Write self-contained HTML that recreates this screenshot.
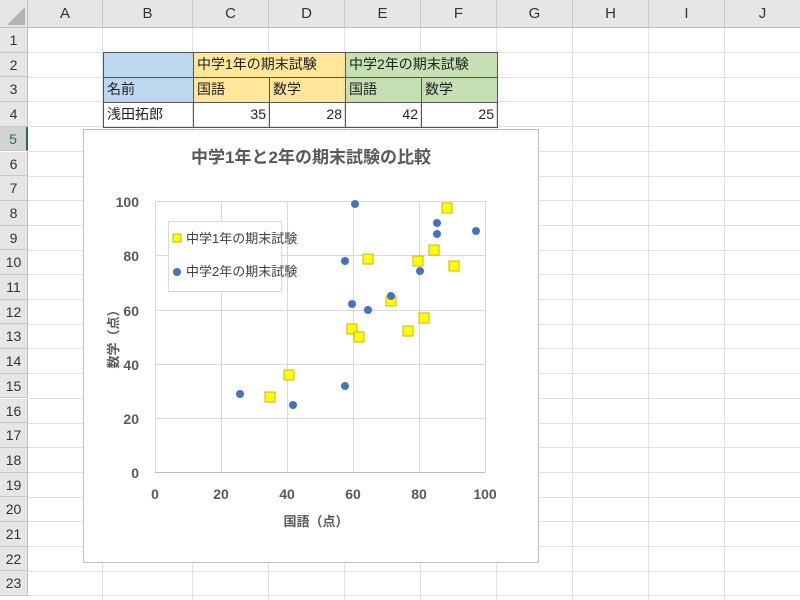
<!DOCTYPE html>
<html><head><meta charset="utf-8"><style>
body{margin:0;width:800px;height:600px;overflow:hidden;background:#fff;font-family:"Liberation Sans","Noto Sans CJK JP",sans-serif;position:relative}
.a{position:absolute;box-sizing:border-box}
.ch{top:0;height:28px;background:#e6e6e6;border-right:1px solid #c8c8c8;border-bottom:1px solid #bdbdbd;text-align:center;line-height:28px;font-size:15px;color:#333}
.rh{left:0;width:28px;background:#e6e6e6;border-bottom:1px solid #c8c8c8;border-right:1px solid #bdbdbd;text-align:center;font-size:14px;color:#333}
.c{font-size:14px;border:1px solid #555;padding-left:3px;line-height:23px;color:#222}
</style></head><body>
<div id="g"></div>
<div class="a c" style="left:103px;top:52px;width:91px;height:26px;background:#bdd7ee"></div>
<div class="a c" style="left:193px;top:52px;width:153px;height:26px;background:#ffe699">中学1年の期末試験</div>
<div class="a c" style="left:345px;top:52px;width:153px;height:26px;background:#c6e0b4">中学2年の期末試験</div>
<div class="a c" style="left:103px;top:77px;width:91px;height:26px;background:#bdd7ee">名前</div>
<div class="a c" style="left:193px;top:77px;width:77px;height:26px;background:#ffe699">国語</div>
<div class="a c" style="left:269px;top:77px;width:77px;height:26px;background:#ffe699">数学</div>
<div class="a c" style="left:345px;top:77px;width:77px;height:26px;background:#c6e0b4">国語</div>
<div class="a c" style="left:421px;top:77px;width:77px;height:26px;background:#c6e0b4">数学</div>
<div class="a c" style="left:103px;top:102px;width:91px;height:26px">浅田拓郎</div>
<div class="a c" style="left:193px;top:102px;width:77px;height:26px;text-align:right;padding-right:3px">35</div>
<div class="a c" style="left:269px;top:102px;width:77px;height:26px;text-align:right;padding-right:3px">28</div>
<div class="a c" style="left:345px;top:102px;width:77px;height:26px;text-align:right;padding-right:3px">42</div>
<div class="a c" style="left:421px;top:102px;width:77px;height:26px;text-align:right;padding-right:3px">25</div>
<svg class="a" style="left:0;top:0" width="800" height="600">
<rect x="83.5" y="129.5" width="455" height="433" fill="#fff" stroke="#bfbfbf"/>
<text x="311" y="163" text-anchor="middle" font-size="17" font-weight="bold" fill="#595959">中学1年と2年の期末試験の比較</text>
<g stroke="#d9d9d9" stroke-width="1">
<line x1="155" y1="201.5" x2="485" y2="201.5"/><line x1="155" y1="255.5" x2="485" y2="255.5"/><line x1="155" y1="310.5" x2="485" y2="310.5"/><line x1="155" y1="364.5" x2="485" y2="364.5"/><line x1="155" y1="418.5" x2="485" y2="418.5"/>
<line x1="155.5" y1="201" x2="155.5" y2="472"/><line x1="221.5" y1="201" x2="221.5" y2="472"/><line x1="287.5" y1="201" x2="287.5" y2="472"/><line x1="353.5" y1="201" x2="353.5" y2="472"/><line x1="419.5" y1="201" x2="419.5" y2="472"/><line x1="485.5" y1="201" x2="485.5" y2="472"/>
</g>
<line x1="155" y1="472.5" x2="485" y2="472.5" stroke="#bfbfbf"/>
<g font-size="14" font-weight="bold" fill="#595959" text-anchor="end">
<text x="139" y="207">100</text><text x="139" y="261">80</text><text x="139" y="316">60</text><text x="139" y="370">40</text><text x="139" y="424">20</text><text x="139" y="478">0</text></g>
<g font-size="14" font-weight="bold" fill="#595959" text-anchor="middle">
<text x="155" y="499">0</text><text x="221" y="499">20</text><text x="287" y="499">40</text><text x="353" y="499">60</text><text x="419" y="499">80</text><text x="485" y="499">100</text>
<text x="316" y="526" font-size="13">国語（点）</text>
<text transform="translate(118,336) rotate(-90)" font-size="13">数学（点）</text></g>
<rect x="168.5" y="221.5" width="113" height="70" fill="#fff" stroke="#d9d9d9"/>
<rect x="173" y="234" width="8" height="8" fill="#ffff00" stroke="#d4b000"/>
<circle cx="177" cy="272" r="4" fill="#4472c4"/>
<text x="186" y="243" font-size="13" fill="#404040">中学1年の期末試験</text>
<text x="186" y="276" font-size="13" fill="#404040">中学2年の期末試験</text>
<g fill="#ffff00" stroke="#d4b000">
<rect x="442" y="203" width="10" height="10"/><rect x="429" y="245" width="10" height="10"/><rect x="449" y="261" width="10" height="10"/><rect x="363" y="254" width="10" height="10"/><rect x="413" y="256" width="10" height="10"/><rect x="386" y="296" width="10" height="10"/><rect x="419" y="313" width="10" height="10"/><rect x="403" y="326" width="10" height="10"/><rect x="347" y="324" width="10" height="10"/><rect x="354" y="332" width="10" height="10"/><rect x="284" y="370" width="10" height="10"/><rect x="265" y="392" width="10" height="10"/>
</g>
<g fill="#4472c4">
<circle cx="355" cy="204" r="4"/><circle cx="437" cy="223" r="4"/><circle cx="437" cy="234" r="4"/><circle cx="476" cy="231" r="4"/><circle cx="345" cy="261" r="4"/><circle cx="420" cy="271" r="4"/><circle cx="391" cy="296" r="4"/><circle cx="352" cy="304" r="4"/><circle cx="368" cy="310" r="4"/><circle cx="345" cy="386" r="4"/><circle cx="240" cy="394" r="4"/><circle cx="293" cy="405" r="4"/>
</g>
</svg>
<script>
var g=document.getElementById('g'),h='';
var xs=[28,103,193,269,345,421,497,573,649,725,801],L='ABCDEFGHIJ';
for(var r=1;r<=23;r++){var t=28+(r-1)*24.7;h+='<div class="a" style="left:28px;top:'+(t+24)+'px;width:772px;height:1px;background:#e1e1e1"></div>';
h+='<div class="a rh" style="top:'+t+'px;height:24.7px;line-height:24px;'+(r==5?'background:#d2d2d2;color:#217346;border-right:2px solid #217346':'')+'">'+r+'</div>';}
for(var i=0;i<10;i++){h+='<div class="a" style="left:'+(xs[i+1]-1)+'px;top:28px;width:1px;height:572px;background:#e1e1e1"></div>';
h+='<div class="a ch" style="left:'+xs[i]+'px;width:'+(xs[i+1]-xs[i])+'px">'+L[i]+'</div>';}
h+='<div class="a" style="left:0;top:0;width:28px;height:28px;background:#e6e6e6;border-right:1px solid #bdbdbd;border-bottom:1px solid #bdbdbd"></div><div class="a" style="left:7px;top:7px;width:0;height:0;border-left:18px solid transparent;border-bottom:18px solid #b4b4b4"></div>';
g.innerHTML=h;
</script>
</body></html>
